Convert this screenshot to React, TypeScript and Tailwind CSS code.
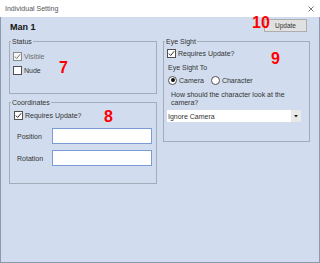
import React from "react";

function Check({ checked, disabled }: { checked?: boolean; disabled?: boolean }) {
  return (
    <span
      className={`flex h-[9px] w-[9px] shrink-0 items-center justify-center border ${
        disabled ? "border-[#8a8a8a] bg-[#f6f6f6]" : "border-[#505050] bg-white"
      }`}
    >
      {checked && (
        <svg width="7" height="7" viewBox="0 0 7 7">
          <path d="M0.8 3.6 L2.7 5.5 L6.2 1.2" fill="none" stroke={disabled ? "#7a7a7a" : "#333"} strokeWidth="1" />
        </svg>
      )}
    </span>
  );
}

function Radio({ checked }: { checked?: boolean }) {
  return (
    <span className="flex h-[9px] w-[9px] shrink-0 items-center justify-center rounded-full border border-[#505050] bg-white">
      {checked && <span className="h-[4px] w-[4px] rounded-full bg-[#111]" />}
    </span>
  );
}

function Group({
  title,
  className,
  children,
}: {
  title: string;
  className: string;
  children: React.ReactNode;
}) {
  return (
    <fieldset className={`m-0 border border-[#a3acb8] p-0 ${className}`}>
      <legend className="ml-[1px] px-[1px] text-[7px] leading-[9px] text-[#333]">{title}</legend>
      {children}
    </fieldset>
  );
}

export default function App() {
  return (
    <div className="relative flex h-[263px] w-[320px] flex-col font-['Liberation_Sans',Arial,sans-serif] text-[7px] leading-[9px] text-[#333]">
      <div className="flex h-[17px] shrink-0 items-center justify-between bg-white pl-[5px] pr-[6px]">
        <span className="text-[#555]">Individual Setting</span>
        <svg width="6" height="6" viewBox="0 0 6 6">
          <path d="M0.5 0.5 L5.5 5.5 M5.5 0.5 L0.5 5.5" stroke="#555" strokeWidth="0.8" />
        </svg>
      </div>
      <div className="flex flex-1 flex-col border-x border-b border-[#8c9ab0] bg-[#d1ddee]">
        <div className="flex h-[20px] shrink-0 items-start justify-between pl-[9px] pr-[12px]">
          <span className="mt-[5px] text-[9px] font-bold leading-[11px] text-[#111]">Man 1</span>
          <button className="mt-[2px] flex h-[13px] w-[43px] items-center justify-center border border-[#adadad] bg-[#e1e1e1] text-[6.5px] text-[#333]">
            Update
          </button>
        </div>
        <div className="flex items-start gap-[6px] pl-[8px]">
          <div className="flex w-[148px] flex-col gap-[4px]">
            <Group title="Status" className="h-[57px]">
              <div className="flex flex-col gap-[4px] pl-[3px] pt-[5px]">
                <div className="flex h-[10px] items-center gap-[2px]">
                  <Check checked disabled />
                  <span className="text-[#6d6d6d]">Visible</span>
                </div>
                <div className="flex h-[10px] items-center gap-[2px]">
                  <Check />
                  <span>Nude</span>
                </div>
              </div>
            </Group>
            <Group title="Coordinates" className="h-[86px]">
              <div className="pl-[4px] pt-[3px]">
                <div className="flex h-[10px] items-center gap-[2px]">
                  <Check checked />
                  <span>Requires Update?</span>
                </div>
              </div>
              <div className="mt-[8px] flex flex-col gap-[6px] pl-[7px]">
                <div className="flex h-[16px] items-center">
                  <span className="w-[35px]">Position</span>
                  <div className="h-[16px] w-[100px] border border-[#7b9bd6] bg-white" />
                </div>
                <div className="flex h-[16px] items-center">
                  <span className="w-[35px]">Rotation</span>
                  <div className="h-[16px] w-[100px] border border-[#7b9bd6] bg-white" />
                </div>
              </div>
            </Group>
          </div>
          <Group title="Eye Sight" className="h-[105px] w-[147px]">
            <div className="flex flex-col pl-[3px] pt-[2px]">
              <div className="flex h-[10px] items-center gap-[2px]">
                <Check checked />
                <span>Requires Update?</span>
              </div>
              <div className="mt-[5px] pl-[1px]">Eye Sight To</div>
              <div className="mt-[3px] flex h-[10px] items-center pl-[1px]">
                <Radio checked />
                <span className="ml-[2px]">Camera</span>
                <span className="ml-[7px]">
                  <Radio />
                </span>
                <span className="ml-[2px]">Character</span>
              </div>
              <div className="mt-[6px] pl-[4px] leading-[8px]">
                How should the character look at the
                <br />
                camera?
              </div>
              <div className="mt-[3px] flex h-[12px] w-[134px] items-center justify-between bg-white">
                <span className="pl-[1px]">Ignore Camera</span>
                <span className="flex h-full w-[10px] items-center justify-center bg-[#e9e9e9]">
                  <svg width="4" height="3" viewBox="0 0 4 3">
                    <path d="M0 0 L4 0 L2 2.5 Z" fill="#222" />
                  </svg>
                </span>
              </div>
            </div>
          </Group>
        </div>
      </div>
      <span className="absolute left-[252px] top-[15px] text-[16px] font-bold leading-none text-[#ff0000]">10</span>
      <span className="absolute left-[59px] top-[60px] text-[16px] font-bold leading-none text-[#ff0000]">7</span>
      <span className="absolute left-[104px] top-[109px] text-[16px] font-bold leading-none text-[#ff0000]">8</span>
      <span className="absolute left-[271px] top-[51px] text-[16px] font-bold leading-none text-[#ff0000]">9</span>
    </div>
  );
}
